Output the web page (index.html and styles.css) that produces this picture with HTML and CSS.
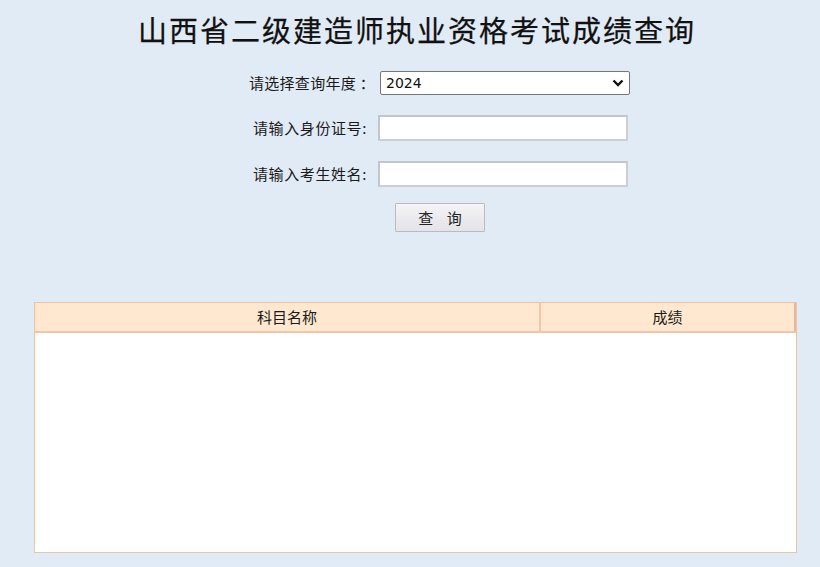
FILE: index.html
```html
<!DOCTYPE html>
<html>

	<head>
		<meta charset="UTF-8">
		<title>山西省二级建造师执业资格考试成绩查询</title>
		<link rel="stylesheet" href="styles.css">
	</head>

	<body>
		<div id="wrap">
			<h1 class="title">山西省二级建造师执业资格考试成绩查询</h1>
			<!--查询条件-->
			<form class="query" onsubmit="return false">
				<label class="lab lab-year" for="year">请选择查询年度 ：</label>
				<span class="selwrap">
					<select id="year" class="sel">
						<option>2024</option>
						<option>2023</option>
						<option>2022</option>
					</select>
					<svg class="arrow" width="12" height="8" viewBox="0 0 12 8"><path d="M1.5 1.5 L6 6 L10.5 1.5" fill="none" stroke="#111" stroke-width="2.4"/></svg>
				</span>
				<label class="lab" for="idcard">请输入身份证号:</label>
				<input id="idcard" class="txt" type="text">
				<label class="lab" for="uname">请输入考生姓名:</label>
				<input id="uname" class="txt" type="text">
				<div class="btnrow">
					<button class="btn" type="submit">查&nbsp;&nbsp;&nbsp;&nbsp;询</button>
				</div>
			</form>
			<!--成绩列表-->
			<div class="result">
				<div class="thead">
					<div class="th th-name">科目名称</div>
					<div class="th th-score">成绩</div>
				</div>
				<div class="tbody"></div>
			</div>
		</div>
	</body>

</html>
```

FILE: styles.css
```css
* {
	margin: 0;
	padding: 0;
	box-sizing: border-box;
}

body,
html {
	height: 100%;
}

body {
	background: #e1ebf5;
	font-family: "Noto Sans CJK SC", "Liberation Sans", sans-serif;
	font-size: 15px;
	color: #1a1a1a;
}

#wrap {
	width: 820px;
	padding-top: 11px;
}

.title {
	font-family: "Noto Sans CJK SC", serif;
	font-size: 29px;
	font-weight: 400;
	letter-spacing: 2px;
	line-height: 36px;
	text-align: center;
	padding-left: 14px;
	color: #111;
	-webkit-text-stroke: 0.25px #111;
}

.query {
	display: grid;
	grid-template-columns: 372px 252px;
	row-gap: 20px;
	margin-top: 24px;
	align-items: center;
}

.lab {
	justify-self: end;
	padding-right: 5px;
	line-height: 24px;
	letter-spacing: 0.6px;
}

.lab-year {
	letter-spacing: 0.3px;
	margin-right: -3px;
	padding-right: 0;
}

.selwrap {
	position: relative;
	margin-left: 8px;
	width: 250px;
	height: 24px;
}

.sel {
	-webkit-appearance: none;
	appearance: none;
	width: 250px;
	height: 24px;
	padding-left: 5px;
	font-family: "DejaVu Sans", sans-serif;
	font-size: 14px;
	border: 1px solid #767676;
	border-radius: 2px;
	background: #fff;
	color: #111;
}

.arrow {
	position: absolute;
	right: 6px;
	top: 8px;
	pointer-events: none;
}

.txt {
	width: 250px;
	height: 26px;
	margin-left: 6px;
	border: 2px solid #bfc6cd;
	border-right-color: #c9cfd5;
	border-bottom-color: #c9cfd5;
	background: #fff;
}

.btnrow {
	grid-column: 1 / 3;
	padding-left: 395px;
	margin-top: -4px;
}

.btn {
	width: 90px;
	height: 29px;
	font-family: "Noto Sans CJK SC", sans-serif;
	font-size: 15px;
	color: #222;
	background: linear-gradient(#f4f4f6, #e3e3e8);
	border: 1px solid #b7bcc4;
	border-radius: 1px;
}

.result {
	width: 763px;
	margin: 70px 0 0 34px;
	border: 1px solid #eec3a4;
	background: #fff;
}

.thead {
	display: flex;
	background: #ffe8cf;
	border-bottom: 2px solid #f1c6a6;
	height: 30px;
}

.th {
	line-height: 28px;
	text-align: center;
}

.th-name {
	width: 506px;
	border-right: 2px solid #f1c6a6;
}

.th-score {
	flex: 1;
	border-right: 2px solid #e9b897;
}

.tbody {
	height: 219px;
}
```
